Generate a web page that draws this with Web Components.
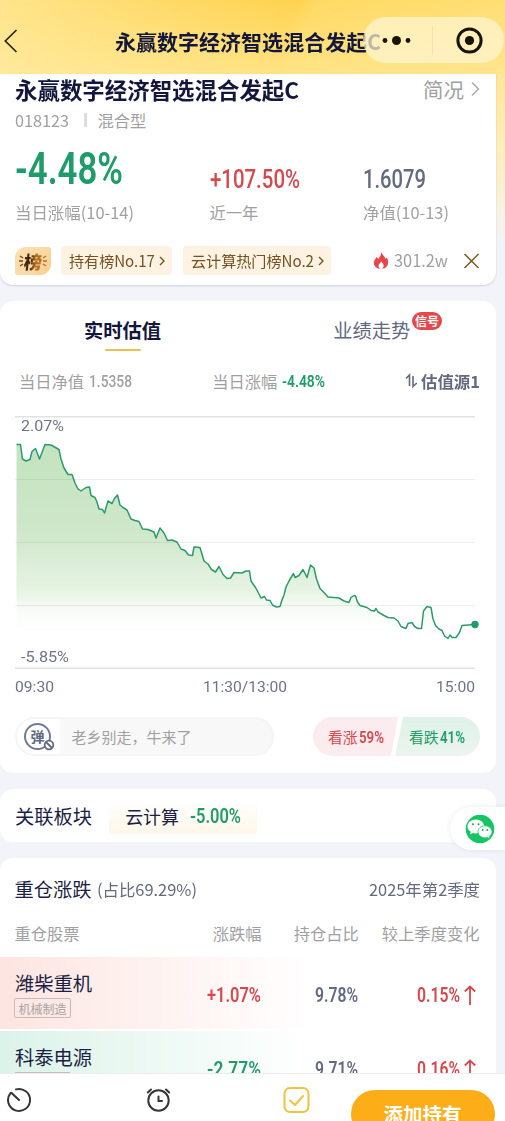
<!DOCTYPE html>
<html lang="zh-CN">
<head>
<meta charset="utf-8">
<meta name="viewport" content="width=device-width, initial-scale=1">
<title>永赢数字经济智选混合发起C</title>
<style>
    html, body {
        margin: 0;
        height: 100%;
        overflow: hidden;
    }
    body {
        background: #f3f4fa;
        font-family: "Noto Sans CJK SC", sans-serif;
    }
</style>
</head>
<body>
<fund-page></fund-page>

<script>
// Rules shared by every section
const baseStyle = `
    * { box-sizing: border-box; }
    svg { display: block; flex: none; }
    .row { display: flex; align-items: center; }
    .din { font-family: Roboto, sans-serif; font-weight: 500; }
    .green { color: #1f9c69; }
    .red { color: #d7474c; }
    .slate { color: #636a80; }
    .grey { color: #a0a0a2; }
`;

class FitText extends HTMLElement {
    connectedCallback() {
        const width = Number(this.getAttribute('width'));
        this.attachShadow({ mode: 'open' });
        this.shadowRoot.innerHTML = `
            <style>
                :host { display: block; flex: none; width: ${width}px; white-space: nowrap; }
                span { display: inline-block; transform-origin: 0 50%; }
            </style>
            <span><slot></slot></span>
        `;
        const span = this.shadowRoot.querySelector('span');
        const natural = span.getBoundingClientRect().width;
        if (natural) {
            span.style.transform = `scaleX(${width / natural})`;
        }
    }
}
customElements.define('fit-text', FitText);

class PanelCard extends HTMLElement {
    connectedCallback() {
        this.attachShadow({ mode: 'open' });
        this.shadowRoot.innerHTML = `
            <style>
                :host {
                    display: block;
                    box-sizing: border-box;
                    width: 496px;
                    background: #fff;
                    border-radius: 13px;
                    overflow: hidden;
                }
            </style>
            <slot></slot>
        `;
    }
}
customElements.define('panel-card', PanelCard);

class NavHeader extends HTMLElement {
    connectedCallback() {
        this.attachShadow({ mode: 'open' });
        this.shadowRoot.innerHTML = `
            <style>
                ${baseStyle}
                :host {
                    display: flex;
                    align-items: center;
                    position: relative;
                    height: 74px;
                    padding-top: 8px;
                    box-sizing: border-box;
                    background:
                        radial-gradient(circle at 440px 90px, rgba(255,230,140,.3) 0 150px, transparent 163px),
                        linear-gradient(180deg, rgba(255,220,110,0) 0%, rgba(255,236,165,.6) 100%),
                        linear-gradient(90deg, #ffe48b 0%, #ffd350 56%, #ffdb68 100%);
                }
                .title {
                    margin-left: 97px;
                    font-size: 21px;
                    font-weight: 700;
                    line-height: 30px;
                    color: #14173c;
                }
                .capsule {
                    position: absolute;
                    right: 1px;
                    top: 17px;
                    width: 141px;
                    height: 46px;
                    border-radius: 23px;
                    background: rgba(255, 245, 210, .72);
                }
            </style>
            <svg width="18" height="24" viewBox="0 0 18 24" fill="none" stroke="#2a2414" stroke-width="1.7">
                <path d="M16.5 1 5.3 12 16.5 23"/>
            </svg>
            <fit-text class="title" width="266">永赢数字经济智选混合发起C</fit-text>
            <div class="capsule">
                <svg width="141" height="46" viewBox="0 0 141 46" fill="#171309">
                    <circle cx="22" cy="23.5" r="2.4"/>
                    <circle cx="33.500" cy="23.5" r="4.5"/>
                    <circle cx="45" cy="23.5" r="2.4"/>
                    <path d="M69.500 9v29" stroke="#efe2b5"/>
                    <circle cx="106.500" cy="23.500" r="11.600" fill="none" stroke="#171309" stroke-width="3"/>
                    <circle cx="106.500" cy="23.500" r="4.600"/>
                </svg>
            </div>
        `;
    }
}
customElements.define('nav-header', NavHeader);

class FundSummary extends HTMLElement {
    connectedCallback() {
        this.attachShadow({ mode: 'open' });
        this.shadowRoot.innerHTML = `
            <style>
                ${baseStyle}
                :host { display: block; }
                panel-card {
                    height: 211px;
                    padding: 0 15px 0 14.500px;
                    border-radius: 0 0 13px 13px;
                    box-shadow: 0 1px 2px rgba(50, 50, 80, .18);
                }
                .name { height: 29px; color: #14173c; font-size: 22.5px; font-weight: 700; line-height: 26px; }
                .brief { margin-left: auto; margin-right: 7px; font-size: 20.5px; font-weight: 400; }
                .code { height: 33px; font-size: 16.3px; line-height: 22px; }
                .bar { width: 3px; height: 14px; background: #ddd; margin: 0 11px 0 15px; }
                .stats { height: 92px; align-items: flex-end; }
                .stat { display: flex; flex-direction: column; }
                .stat .din { font-size: 25px; line-height: 24px; margin-bottom: 8px; }
                .stat .din.big { font-size: 43.500px; line-height: 42px; margin-bottom: 9px; font-weight: 600; }
                .stat .label { font-size: 16.3px; line-height: 24px; padding-bottom: 4px; }
                .tags { height: 29px; margin-top: 18px; font-size: 15.3px; color: #735222; }
                .tag {
                    height: 29px;
                    padding: 0 6px 0 8px;
                    border-radius: 4px;
                    background: #fef2e3;
                    margin-right: 11px;
                    line-height: 27px;
                }
                .tag svg { margin-left: 3px; }
                .rank {
                    width: 36px; height: 28px;
                    border-radius: 11px 3px 11px 3px;
                    background: linear-gradient(120deg, #fce0b0, #fad9a4 60%, #fbcb8a);
                    display: flex; align-items: center; justify-content: center;
                    margin-right: 10.500px;
                    font-size: 18px; font-weight: 900;
                    line-height: 26px;
                }
                .rank span {
                    background: linear-gradient(90deg, #40270e 35%, #b56f25 65%);
                    -webkit-background-clip: text;
                    background-clip: text;
                    color: transparent;
                    transform: skewX(-6deg);
                }
                .heat { font-size: 16.800px; margin: 0 15px 0 5px; line-height: 27px; }
            </style>
            <panel-card>
                <div class="row name">
                    <fit-text width="284">永赢数字经济智选混合发起C</fit-text>
                    <span class="brief grey">简况</span>
                    <svg width="10" height="16" viewBox="0 0 10 16" fill="none" stroke="#aaa" stroke-width="1.500"><path d="M1 1.500 7.500 8 1 14.500"/></svg>
                </div>
                <div class="row code grey">
                    <fit-text width="54">018123</fit-text>
                    <span class="bar"></span>
                    <span>混合型</span>
                </div>
                <div class="row stats">
                    <div class="stat" style="width:195px">
                        <fit-text class="din big green" width="108">-4.48%</fit-text>
                        <fit-text class="label grey" width="119">当日涨幅(10-14)</fit-text>
                    </div>
                    <div class="stat" style="width:153px">
                        <fit-text class="din red" width="90">+107.50%</fit-text>
                        <span class="label grey">近一年</span>
                    </div>
                    <div class="stat">
                        <fit-text class="din slate" width="63">1.6079</fit-text>
                        <fit-text class="label grey" width="86">净值(10-13)</fit-text>
                    </div>
                </div>
                <div class="row tags">
                    <div class="rank">
                        <svg width="5" height="16" viewBox="0 0 5 16" stroke="#70430f" stroke-width="1.300"><path d="M1 3l3 2M0 8h4M1 13l3-2"/></svg>
                        <span>榜</span>
                        <svg width="5" height="16" viewBox="0 0 5 16" stroke="#b56f25" stroke-width="1.300"><path d="M4 3L1 5M5 8H1M4 13l-3-2"/></svg>
                    </div>
                    <div class="row tag">
                        <fit-text width="86">持有榜No.17</fit-text>
                        <svg width="8" height="10" viewBox="0 0 8 10" fill="none" stroke="#735222" stroke-width="1.400"><path d="M2 1l4 4-4 4"/></svg>
                    </div>
                    <div class="row tag">
                        <fit-text width="123">云计算热门榜No.2</fit-text>
                        <svg width="8" height="10" viewBox="0 0 8 10" fill="none" stroke="#735222" stroke-width="1.400"><path d="M2 1l4 4-4 4"/></svg>
                    </div>
                    <svg width="16" height="18" viewBox="0 0 16 18" style="margin-left:auto">
                        <path fill="#e8464a" d="M8.500 0C9.200 3.200 12 4.300 12.500 7l1.300-1.500c1 2 1.700 4 1.200 6.300C14.300 15 11.500 17 8 17S1 14.800.800 11.300C.700 8.300 2.700 7 3.600 5l1.700 2C6.800 5 8 3 8.500 0z"/>
                        <path fill="#fff" d="M8.300 9.500c1.300 1.700 2.500 2.700 2.300 4.400-.2 1.500-1.300 3.300-2.600 3.300s-2.400-1.900-2.500-3.400c0-1.700 1.600-2.500 2.800-4.300z"/>
                    </svg>
                    <fit-text class="heat grey" width="54">301.2w</fit-text>
                    <svg width="17" height="16" viewBox="0 0 17 16" stroke="#7b612b" stroke-width="1.600" style="margin-right:1px"><path d="M1.500 1l14 14M15.500 1l-14 14"/></svg>
                </div>
            </panel-card>
        `;
    }
}
customElements.define('fund-summary', FundSummary);

// Intraday estimate, in px of the 460x252 plot
const plotPoints = [
    [1.5,28.5],[5.5,28.5],[7.500,43],[11,45],[15,43.500],[17,35.500],[20.500,32.500],[24.500,43],[30,28.500],[36,29],[44,33.500],
    [46,43],[49,52],[53,58.500],[57,58.500],[60,67],[63,73],[66,75],[71,71.500],[74.500,71],[76,79.500],[80,81.500],[82,86],[84,93],
    [87.500,93.500],[89.500,97],[93,85],[97,87.500],[99.500,82.500],[102.500,79],[105,89],[108,91.500],[112,94],[116,103],[120,104.500],
    [124,105.500],[127.500,113],[133,113.500],[139,116],[141,122],[145,112],[149,117],[152.500,124.500],[157,124],[162,126],[166,133],
    [170,134.500],[173.500,139],[177.500,139.500],[179,131],[185,131.500],[189,145],[193,148],[196.500,153.500],[200.500,156],[204,150.500],
    [208,158.500],[212,162.500],[215.500,162],[219,156.500],[227,157],[231,155],[234.500,155],[236,165],[240.500,171.500],[244,178],
    [246,182],[249.500,180.500],[251.500,184],[255,184.500],[257.500,189],[261.500,191],[265,190.500],[267,184],[269,179],[271,171],
    [274.500,164],[278.500,157.500],[280,161.500],[284,159.500],[288,153.500],[292,161.500],[295.500,149],[299,152],[301.500,163],
    [305,172.500],[309.500,177],[313,181],[324,182],[329,185],[334,186.500],[336,181.500],[339,179.500],[340.500,180],[342.500,186],
    [345,189.500],[352,191.500],[356,194.500],[359.500,195],[361,192.500],[363,196],[369,199.500],[373,201.500],[379,202],[383,205],
    [386,210.500],[391,212.500],[393,207.500],[397,206.500],[399.500,210.500],[403,212.500],[406.500,212.500],[408.500,195],[412,190.500],
    [416,191.500],[418,203],[420.500,209.500],[424,213],[427,214.500],[429.500,220],[433,222.500],[435,219],[437,221.500],[441,221.500],
    [444.500,216.500],[447,209.500],[460,208.500]
];

class EstimateChart extends HTMLElement {
    connectedCallback() {
        const line = plotPoints.map(p => p.join(' ')).join('L');
        this.attachShadow({ mode: 'open' });
        this.shadowRoot.innerHTML = `
            <style>
                ${baseStyle}
                :host {
                    display: block;
                    position: relative;
                    width: 465px;
                    height: 284px;
                    font-family: Roboto, sans-serif;
                    font-size: 14.500px;
                    color: #6e7487;
                }
                .max, .min { position: absolute; left: 5.500px; line-height: 18px; }
                .max { top: 2px; }
                .min { top: 233px; }
                .times { justify-content: space-between; width: 460px; height: 37px; }
            </style>
            <svg width="465" height="253" viewBox="0 0 465 253">
                <defs>
                    <linearGradient id="fade" gradientUnits="userSpaceOnUse" x1="0" y1="28" x2="0" y2="222">
                        <stop offset="0" stop-color="#c3e3bf"/>
                        <stop offset=".45" stop-color="#cfe7ca"/>
                        <stop offset=".75" stop-color="#e6f3e3"/>
                        <stop offset="1" stop-color="#fff" stop-opacity="0"/>
                    </linearGradient>
                </defs>
                <path fill="url(#fade)" d="M${line}V224H1.500Z"/>
                <path stroke="#7a7a7a" stroke-opacity=".13" d="M0 63.500h460M0 126.500h460M0 189.500h460"/>
                <path stroke="#dfe1e3" stroke-width="1.500" d="M0 .700h460M0 252.300h460"/>
                <path fill="none" stroke="#2c9a6b" stroke-width="1.500" stroke-linejoin="round" d="M${line}"/>
                <circle cx="460" cy="208.500" r="3.700" fill="#1f9c69"/>
            </svg>
            <fit-text class="max" width="43">2.07%</fit-text>
            <fit-text class="min" width="48">-5.85%</fit-text>
            <div class="row times">
                <fit-text width="39">09:30</fit-text>
                <fit-text width="84">11:30/13:00</fit-text>
                <fit-text width="39">15:00</fit-text>
            </div>
        `;
    }
}
customElements.define('estimate-chart', EstimateChart);

class EstimatePanel extends HTMLElement {
    connectedCallback() {
        this.attachShadow({ mode: 'open' });
        this.shadowRoot.innerHTML = `
            <style>
                ${baseStyle}
                :host { display: block; }
                panel-card { height: 472px; padding: 0 0 0 15px; }
                .tabs { height: 59px; font-size: 19.3px; line-height: 28px; padding-left: 69px; align-items: flex-start; }
                .tab { padding-top: 15px; position: relative; }
                .tab.on { color: #14173c; font-weight: 700; margin-right: 172px; }
                .tab.on::after {
                    content: '';
                    display: block;
                    width: 36px; height: 2px;
                    margin: 5px auto 0;
                    border-radius: 1px;
                    background: #e8c056;
                }
                .badge {
                    position: absolute;
                    left: 79px; top: 11px;
                    width: 30px; height: 18px;
                    border-radius: 9px;
                    background: #e5484a;
                    color: #fff;
                    font-size: 12px; font-weight: 700;
                    line-height: 18px;
                    text-align: center;
                }
                .quote { height: 41px; font-size: 16.300px; line-height: 24px; padding: 0 16px 0 4px; }
                .quote .din { font-size: 17px; font-weight: 500; line-height: 24px; margin-left: 5px; }
                .quote .din.green { font-weight: 600; }
                .source { font-weight: 600; margin-left: auto; }
                .source svg { margin-right: 3px; }
                estimate-chart { margin-top: 15px; }
                .actions { height: 39px; margin-top: 17px; padding-right: 16px; }
                .danmu {
                    width: 259px; height: 39px;
                    border: 2px solid #f5f5f6;
                    border-radius: 20px;
                    background: #f8f8f9;
                    font-size: 15px;
                    line-height: 22px;
                    overflow: hidden;
                }
                .danmu .toggle {
                    width: 43px; height: 35px;
                    margin-right: 11.500px;
                    background: #fff;
                    position: relative;
                    display: flex; align-items: center;
                    padding-left: 7px;
                }
                .ring {
                    width: 27px; height: 27px;
                    border: 2.500px solid #737990;
                    border-radius: 50%;
                    text-align: center;
                    color: #636a80;
                    font-size: 14px; font-weight: 700;
                    line-height: 22px;
                    white-space: nowrap;
                }
                .off { position: absolute; left: 26px; top: 20px; }
                .vote { margin-left: auto; height: 39px; font-size: 14.800px; line-height: 24px; }
                .vote .row { height: 39px; }
                .vote .din { font-size: 17px; margin-left: 1px; font-weight: 600; }
                .up {
                    width: 85px;
                    padding-left: 15px;
                    border-radius: 20px 0 0 20px;
                    background: linear-gradient(#fbecef, #fdecee);
                    clip-path: polygon(0 0, 100% 0, 78px 100%, 0 100%);
                }
                .down {
                    width: 85px;
                    margin-left: -3px;
                    padding-left: 14px;
                    border-radius: 0 20px 20px 0;
                    background: linear-gradient(#dff2e7, #eaf5ed);
                    clip-path: polygon(8px 0, 100% 0, 100% 100%, 0 100%);
                }
            </style>
            <panel-card>
                <div class="row tabs">
                    <div class="tab on">实时估值</div>
                    <div class="tab slate">业绩走势<span class="badge">信号</span></div>
                </div>
                <div class="row quote grey">
                    <span>当日净值</span><fit-text class="din" width="43">1.5358</fit-text>
                    <span style="margin-left:80px">当日涨幅</span><fit-text class="din green" width="43">-4.48%</fit-text>
                    <div class="row source slate">
                        <svg width="13" height="16" viewBox="0 0 13 16" fill="none" stroke="#636a80" stroke-width="1.600"><path d="M1 5.500 4.500 2V13M8 3v10.500L11.800 10"/></svg>
                        <fit-text width="59">估值源1</fit-text>
                    </div>
                </div>
                <estimate-chart></estimate-chart>
                <div class="row actions">
                    <div class="row danmu grey">
                        <div class="toggle">
                            <div class="ring">弹</div>
                            <svg class="off" width="12" height="12" viewBox="0 0 12 12" fill="#fff" stroke="#636a80" stroke-width="1.800"><circle cx="6" cy="6" r="4.300"/><path d="M3 3l6 6"/></svg>
                        </div>
                        <span>老乡别走，牛来了</span>
                    </div>
                    <div class="row vote">
                        <div class="row up red"><span>看涨</span><fit-text class="din" width="25">59%</fit-text></div>
                        <div class="row down green"><span>看跌</span><fit-text class="din" width="25">41%</fit-text></div>
                    </div>
                </div>
            </panel-card>
        `;
    }
}
customElements.define('estimate-panel', EstimatePanel);

class RelatedSector extends HTMLElement {
    connectedCallback() {
        this.attachShadow({ mode: 'open' });
        this.shadowRoot.innerHTML = `
            <style>
                ${baseStyle}
                :host { display: block; color: #1c1f44; }
                .line { height: 53px; padding-left: 15px; font-size: 19.300px; line-height: 28px; }
                .chip {
                    width: 148px; height: 34px;
                    margin: 3px 0 0 17px;
                    padding-left: 16px;
                    border-radius: 3px;
                    background: linear-gradient(#fff, #fef6e9);
                    font-size: 18px;
                    line-height: 24px;
                }
                .chip .din { font-size: 20px; margin-left: 11px; font-weight: 600; }
                .chip fit-text { margin-bottom: 2px; }
            </style>
            <panel-card>
                <div class="row line">
                    <span>关联板块</span>
                    <div class="row chip"><fit-text width="54">云计算</fit-text><fit-text class="din green" width="51">-5.00%</fit-text></div>
                </div>
            </panel-card>
        `;
    }
}
customElements.define('related-sector', RelatedSector);

class StockRow extends HTMLElement {
    connectedCallback() {
        const change = this.getAttribute('change');
        const rising = change.startsWith('+');
        this.attachShadow({ mode: 'open' });
        this.shadowRoot.innerHTML = `
            <style>
                ${baseStyle}
                :host {
                    display: flex;
                    height: 72px;
                    box-sizing: border-box;
                    margin-bottom: 2px;
                    padding: 0 19px 0 15px;
                    background: linear-gradient(90deg, ${rising ? '#fde5e1' : '#dcf3e9'}, rgba(255,255,255,0) 310px);
                }
                .stock { width: 192px; padding-top: 12px; }
                .name { font-size: 19.300px; line-height: 28px; color: #1c1f44; }
                .tag {
                    display: block;
                    width: 57px; height: 20px;
                    margin: 1px 0 0 -1px;
                    border: 1px solid #c5b9b9;
                    border-radius: 2px;
                    color: #aaa1a2;
                    font-size: 12px; line-height: 19px;
                    text-align: center;
                }
                .figures { height: 76px; font-size: 20px; }
                .figures fit-text { font-weight: 600; }
                .figures svg { margin-left: 5px; }
            </style>
            <div class="stock">
                <div class="name"><slot></slot></div>
                <span class="tag">${this.getAttribute('sector')}</span>
            </div>
            <div class="row figures din">
                <fit-text class="${rising ? 'red' : 'green'}" width="54">${change}</fit-text>
                <fit-text class="slate" width="43" style="margin-left:54px">${this.getAttribute('share')}</fit-text>
                <fit-text class="red" width="43" style="margin-left:59px">${this.getAttribute('shift')}</fit-text>
                <svg width="12" height="20" viewBox="0 0 12 20" fill="none" stroke="#d7474c" stroke-width="1.800" style="margin-left:4px"><path d="M6 20V2M.800 6.500 6 1.500l5.200 5"/></svg>
            </div>
        `;
    }
}
customElements.define('stock-row', StockRow);

class HoldingsPanel extends HTMLElement {
    connectedCallback() {
        this.attachShadow({ mode: 'open' });
        this.shadowRoot.innerHTML = `
            <style>
                ${baseStyle}
                :host { display: block; }
                panel-card { border-radius: 13px 13px 0 0; height: 262px; }
                .head { height: 61px; padding: 0 16.500px 0 14.500px; font-size: 16.300px; }
                .head .title { font-size: 19.300px; color: #1c1f44; margin-right: 5px; }
                .head .quarter { margin-left: auto; }
                .cols { height: 27px; margin-bottom: 11px; padding: 0 16.500px 0 14.500px; font-size: 16.300px; line-height: 24px; }
            </style>
            <panel-card>
                <div class="row head slate">
                    <span class="title">重仓涨跌</span>
                    <fit-text width="100">(占比69.29%)</fit-text>
                    <fit-text class="quarter" width="111">2025年第2季度</fit-text>
                </div>
                <div class="row cols grey">
                    <span>重仓股票</span>
                    <span style="margin-left:auto">涨跌幅</span>
                    <span style="margin-left:32px">持仓占比</span>
                    <span style="margin-left:23px">较上季度变化</span>
                </div>
                <stock-row sector="机械制造" change="+1.07%" share="9.78%" shift="0.15%">潍柴重机</stock-row>
                <stock-row sector="机械制造" change="-2.77%" share="9.71%" shift="0.16%">科泰电源</stock-row>
            </panel-card>
        `;
    }
}
customElements.define('holdings-panel', HoldingsPanel);

class WechatFloat extends HTMLElement {
    connectedCallback() {
        this.attachShadow({ mode: 'open' });
        this.shadowRoot.innerHTML = `
            <style>
                :host {
                    position: absolute;
                    right: 0;
                    top: 807px;
                    width: 55px;
                    height: 43px;
                    box-sizing: border-box;
                    padding: 7px 0 0 15px;
                    border-radius: 22px 0 0 22px;
                    background: #fff;
                    box-shadow: 0 0 5px rgba(60, 60, 90, .1);
                }
                svg { display: block; }
            </style>
            <svg width="30" height="30" viewBox="0 0 30 30">
                <circle cx="15" cy="15" r="14.300" fill="#18c564"/>
                <path fill="#fff" d="M10.800 5.500c4.800 0 8.300 3.100 8.300 7s-3.500 7-8.300 7c-1 0-2-.1-2.900-.4L5 20.500l.8-2.800c-2-1.300-3.300-3.100-3.300-5.200 0-3.900 3.500-7 8.300-7z"/>
                <path fill="#fff" stroke="#18c564" stroke-width=".8" d="M20 11.800c4 0 7 2.700 7 6 0 1.900-1 3.500-2.600 4.600l.6 2.400-2.600-1.300c-.8.200-1.600.4-2.400.4-4 0-7-2.800-7-6.100s3-6 7-6z"/>
                <g fill="#18a558"><circle cx="8" cy="10.300" r="1"/><circle cx="13.500" cy="10.300" r="1"/><circle cx="17.700" cy="16" r=".9"/><circle cx="22.300" cy="16" r=".9"/></g>
            </svg>
        `;
    }
}
customElements.define('wechat-float', WechatFloat);

class BottomBar extends HTMLElement {
    connectedCallback() {
        this.attachShadow({ mode: 'open' });
        this.shadowRoot.innerHTML = `
            <style>
                ${baseStyle}
                :host {
                    position: absolute;
                    left: 0; right: 0; bottom: 0;
                    display: flex;
                    align-items: flex-start;
                    height: 48px;
                    overflow: hidden;
                    background: #fff;
                    border-top: 1px solid #ededf0;
                    box-sizing: border-box;
                    padding: 13px 11px 0 6px;
                }
                button {
                    flex: none;
                    width: 144px; height: 48px;
                    margin: 3px 0 0 40.500px;
                    padding: 0;
                    border: 0;
                    border-radius: 24px;
                    background: #fcad18;
                    color: #fff;
                    font: 700 19.500px/46px "Noto Sans CJK SC", sans-serif;
                }
            </style>
            <svg width="26" height="26" viewBox="0 0 26 26" fill="none" stroke="#363638" stroke-width="2" stroke-linecap="round">
                <path d="M10 2.400A11 11 0 1 1 4.300 6.300M5.300 5.800 13 13"/>
            </svg>
            <svg width="26" height="26" viewBox="0 0 26 26" fill="none" stroke="#363638" stroke-width="2" stroke-linecap="round" style="margin-left:114px">
                <circle cx="12.500" cy="13.500" r="10.200"/>
                <path d="M12.500 9.500V14H16M1.800 5.500 5 2.500M20 2.500l3.200 3"/>
            </svg>
            <svg width="27" height="27" viewBox="0 0 27 27" fill="none" stroke="#f0c23e" stroke-width="2" stroke-linecap="round" stroke-linejoin="round" style="margin-left:111px">
                <rect x="1.500" y="1" width="24" height="24" rx="5.500"/>
                <path d="M7 13.500l5 4.500 8-9"/>
            </svg>
            <button>添加持有</button>
        `;
    }
}
customElements.define('bottom-bar', BottomBar);

class FundPage extends HTMLElement {
    connectedCallback() {
        this.attachShadow({ mode: 'open' });
        this.shadowRoot.innerHTML = `
            <style>
                :host {
                    display: block;
                    position: relative;
                    width: 505px;
                    height: 1121px;
                    overflow: hidden;
                    background: linear-gradient(#ffe697 74px, #fdeebb 150px, #f3f4fa 245px);
                }
                main { display: flex; flex-direction: column; gap: 16px; }
            </style>
            <nav-header></nav-header>
            <main>
                <fund-summary></fund-summary>
                <estimate-panel></estimate-panel>
                <related-sector></related-sector>
                <holdings-panel></holdings-panel>
            </main>
            <wechat-float></wechat-float>
            <bottom-bar></bottom-bar>
        `;
    }
}
customElements.define('fund-page', FundPage);
</script>
</body>
</html>
